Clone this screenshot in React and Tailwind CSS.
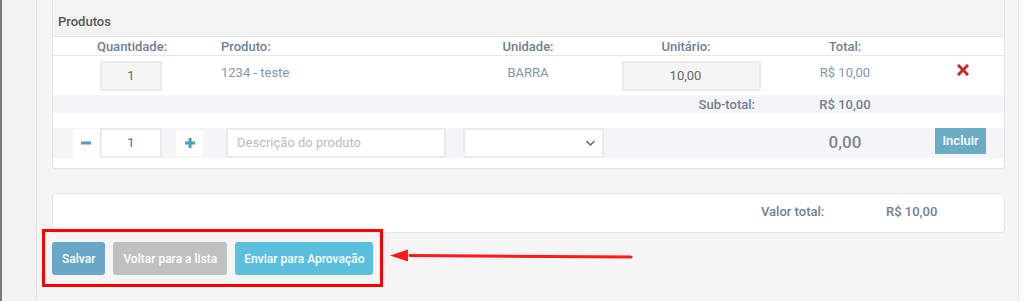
import React from 'react';

const cols = 'grid grid-cols-[158px_242px_150px_166px_152px_1fr]';

function Row({ children, className = '' }) {
    return <div className={`${cols} ${className}`}>{children}</div>;
}

export default function App() {
    return (
        <div className="relative flex h-[301px] w-[1024px] overflow-hidden font-['Roboto',sans-serif] text-[13px]">
            {/* left rail */}
            <div className="w-[2px] bg-[#7a7a7a]" />
            <div className="w-[35px] border-r border-[#e2e2e2] bg-[#f2f2f2]" />

            {/* main */}
            <div className="flex flex-1 flex-col bg-[#f5f5f5] pl-[15px] pr-[13px]">
                {/* products panel */}
                <div className="flex flex-col rounded-b-[4px] border border-t-0 border-[#e4e4e4] bg-white pb-[10px] shadow-[0_1px_1px_rgba(0,0,0,0.04)]">
                    <div className="h-[37px] border-b border-[#e6e6e6] bg-[#f3f3f3] px-[5px] pt-[14px] font-medium text-[#555] leading-[16px]">
                        Produtos
                    </div>

                    <Row className="h-[19px] items-center border-b border-[#e8e8e8] font-medium text-[#6f7f95]">
                        <div className="text-center">Quantidade:</div>
                        <div className="pl-[10px]">Produto:</div>
                        <div className="text-center">Unidade:</div>
                        <div className="text-center">Unitário:</div>
                        <div className="text-center">Total:</div>
                        <div />
                    </Row>

                    <Row className="h-[39px] items-start text-[#8294aa]">
                        <div className="flex justify-center pt-[5px] pr-[2px]">
                            <div className="flex h-[30px] w-[62px] items-center justify-center border-2 border-[#ebebeb] bg-[#f5f5f5] text-[#666]">1</div>
                        </div>
                        <div className="pl-[10px] pt-[7px]">1234 - teste</div>
                        <div className="pt-[7px] text-center">BARRA</div>
                        <div className="pl-[19px] pt-[5px]">
                            <div className="flex h-[30px] w-[139px] items-center justify-center border-2 border-[#ebebeb] bg-[#f5f5f5] pr-[12px] text-[#666]">10,00</div>
                        </div>
                        <div className="pt-[7px] text-center">R$ 10,00</div>
                        <div className="flex justify-center pt-[8px]">
                            <svg width="12" height="12" viewBox="0 0 12 12">
                                <path d="M2 2 L10 10 M10 2 L2 10" stroke="#c62828" strokeWidth="3" strokeLinecap="square" />
                            </svg>
                        </div>
                    </Row>

                    <Row className="h-[18px] items-center bg-[#f5f5f7] font-medium text-[#6f7f95]">
                        <div />
                        <div />
                        <div />
                        <div className="pr-[14px] text-right">Sub-total:</div>
                        <div className="text-center">R$ 10,00</div>
                        <div />
                    </Row>

                    <div className="h-[15px]" />

                    <Row className="h-[30px] items-center bg-[#f5f5f7]">
                        <div className="flex items-center pl-[20px]">
                            <button className="flex h-[29px] w-[26px] items-center justify-center rounded-[3px] bg-white">
                                <svg width="12" height="12" viewBox="0 0 12 12"><path d="M1 6 H11" stroke="#4f9cc0" strokeWidth="3" /></svg>
                            </button>
                            <div className="ml-[1px] flex h-[30px] w-[62px] items-center justify-center border-2 border-[#ebebeb] bg-white text-[#666]">1</div>
                            <button className="ml-[14px] flex h-[26px] w-[27px] items-center justify-center rounded-[3px] bg-white">
                                <svg width="12" height="12" viewBox="0 0 12 12"><path d="M1 6 H11 M6 1 V11" stroke="#4f9cc0" strokeWidth="3" /></svg>
                            </button>
                        </div>
                        <div className="pl-[15px]">
                            <div className="flex h-[30px] w-[220px] items-center border-2 border-[#ebebeb] bg-white pl-[9px] text-[#bbb]">Descrição do produto</div>
                        </div>
                        <div className="pl-[10px]">
                            <div className="flex h-[30px] w-[141px] items-center justify-end border-2 border-[#ebebeb] bg-white pr-[6px]">
                                <svg width="11" height="8" viewBox="0 0 11 8"><path d="M1.5 2 L5.5 6 L9.5 2" fill="none" stroke="#666" strokeWidth="1.5" /></svg>
                            </div>
                        </div>
                        <div />
                        <div className="text-center text-[17px] font-medium text-[#7b8596]">0,00</div>
                        <div className="-mt-[4px] pl-[14px]">
                            <button className="h-[26px] w-[51px] bg-[#6aabc6] text-[13px] font-medium text-white">Incluir</button>
                        </div>
                    </Row>
                </div>

                {/* total panel */}
                <div className="mt-[24px] flex h-[40px] items-start rounded-[4px] border border-[#e4e4e4] bg-white pt-[8px] font-medium text-[#6f7f95]">
                    <div className="ml-[708px] w-[125px]">Valor total:</div>
                    <div>R$ 10,00</div>
                </div>

                {/* actions */}
                <div className="mt-[9px] flex gap-[8px]">
                    <button className="h-[33px] rounded-[3px] bg-[#68a8c6] px-[10px] text-[12px] font-medium text-white">Salvar</button>
                    <button className="h-[33px] rounded-[3px] bg-[#c0c0c0] px-[10px] text-[12px] font-medium text-white">Voltar para a lista</button>
                    <button className="h-[33px] rounded-[3px] bg-[#5bc0de] px-[9px] text-[12px] font-medium text-white">Enviar para Aprovação</button>
                </div>
            </div>
            <div className="w-[6px] border-l border-[#e4e4e4] bg-[#fafafa]" />

            {/* annotation: red box + arrow */}
            <div className="absolute left-[42px] top-[229px] h-[58px] w-[341px] border-[3px] border-[#ff0000]" />
            <svg className="absolute left-[388px] top-[246px]" width="246" height="20" viewBox="0 0 246 20">
                <path d="M22 9.5 L243 11" stroke="#ff1a1a" strokeWidth="3" strokeLinecap="round" />
                <path d="M2 9.5 L20 3.5 L20 15.5 Z" fill="#ff1a1a" />
            </svg>
        </div>
    );
}
